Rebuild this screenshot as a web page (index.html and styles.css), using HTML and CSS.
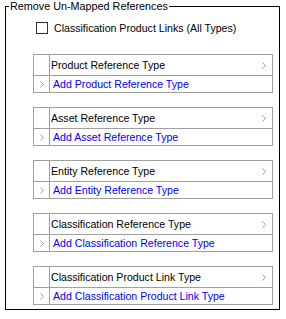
FILE: index.html
```html
<!DOCTYPE html>
<html>
<head>
  <title>Remove Un-Mapped References</title>
  <meta charset="utf-8">
  <link rel="stylesheet" href="styles.css">
</head>
<body>
  <fieldset class="group">
    <legend>Remove Un-Mapped References</legend>
    <label class="check"><span class="box"></span>Classification Product Links (All Types)</label>

    <div class="ref">
      <div class="row head"><div class="gutter"></div><div class="cell">Product Reference Type<svg class="chev" width="4" height="7"><polyline points="0.5,0.5 3.5,3.5 0.5,6.5"/></svg></div></div>
      <div class="row add"><div class="gutter"><svg class="chev" width="4" height="7"><polyline points="0.5,0.5 3.5,3.5 0.5,6.5"/></svg></div><div class="cell link">Add Product Reference Type</div></div>
    </div>

    <div class="ref">
      <div class="row head"><div class="gutter"></div><div class="cell">Asset Reference Type<svg class="chev" width="4" height="7"><polyline points="0.5,0.5 3.5,3.5 0.5,6.5"/></svg></div></div>
      <div class="row add"><div class="gutter"><svg class="chev" width="4" height="7"><polyline points="0.5,0.5 3.5,3.5 0.5,6.5"/></svg></div><div class="cell link">Add Asset Reference Type</div></div>
    </div>

    <div class="ref">
      <div class="row head"><div class="gutter"></div><div class="cell">Entity Reference Type<svg class="chev" width="4" height="7"><polyline points="0.5,0.5 3.5,3.5 0.5,6.5"/></svg></div></div>
      <div class="row add"><div class="gutter"><svg class="chev" width="4" height="7"><polyline points="0.5,0.5 3.5,3.5 0.5,6.5"/></svg></div><div class="cell link">Add Entity Reference Type</div></div>
    </div>

    <div class="ref">
      <div class="row head"><div class="gutter"></div><div class="cell">Classification Reference Type<svg class="chev" width="4" height="7"><polyline points="0.5,0.5 3.5,3.5 0.5,6.5"/></svg></div></div>
      <div class="row add"><div class="gutter"><svg class="chev" width="4" height="7"><polyline points="0.5,0.5 3.5,3.5 0.5,6.5"/></svg></div><div class="cell link">Add Classification Reference Type</div></div>
    </div>

    <div class="ref">
      <div class="row head"><div class="gutter"></div><div class="cell">Classification Product Link Type<svg class="chev" width="4" height="7"><polyline points="0.5,0.5 3.5,3.5 0.5,6.5"/></svg></div></div>
      <div class="row add"><div class="gutter"><svg class="chev" width="4" height="7"><polyline points="0.5,0.5 3.5,3.5 0.5,6.5"/></svg></div><div class="cell link">Add Classification Product Link Type</div></div>
    </div>
  </fieldset>
</body>
</html>
```
FILE: styles.css
```css
html, body {
  margin: 0;
  background-color: #fff;
}
body {
  font-family: "Liberation Sans", Arial, sans-serif;
  font-size: 10.6px;
  color: #000;
}
.group {
  margin: 0 6px 0 5px;
  padding: 0 0 6px 0;
  height: 310px;
  box-sizing: border-box;
  border: 1px solid #000;
}
.group legend {
  margin-left: 3px;
  padding: 0 1px;
  line-height: 12px;
  font-size: 10.8px;
}
.check {
  display: flex;
  align-items: center;
  margin: 9px 0 0 30px;
  line-height: 14px;
}
.box {
  width: 10px;
  height: 10px;
  border: 1px solid #333;
  margin-right: 6px;
}
.ref {
  margin: 19px 6px 0 27px;
  border: 1px solid #a0a0a0;
}
.ref + .ref {
  margin-top: 14px;
}
.row {
  display: flex;
}
.row.head {
  height: 20px;
  border-bottom: 1px solid #a0a0a0;
}
.row.add {
  height: 16px;
}
.gutter {
  width: 15px;
  border-right: 1px solid #a0a0a0;
  display: flex;
  align-items: center;
  justify-content: center;
}
.cell {
  flex: 1;
  display: flex;
  align-items: center;
  padding-left: 1px;
  white-space: nowrap;
}
.head .cell {
  justify-content: space-between;
  padding-right: 6px;
}
.link {
  color: #0000ff;
  padding-left: 3px;
}
.chev {
  fill: none;
  stroke: #a0a0a0;
  stroke-width: 1;
}
```
